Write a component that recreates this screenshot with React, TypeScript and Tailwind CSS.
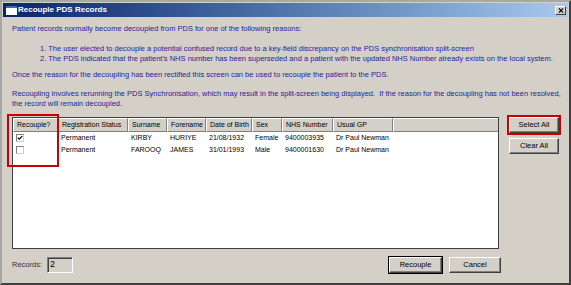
const cols = [
  { label: "Recouple?", w: 45 },
  { label: "Registration Status", w: 70 },
  { label: "Surname", w: 39 },
  { label: "Forename", w: 39 },
  { label: "Date of Birth", w: 46 },
  { label: "Sex", w: 30 },
  { label: "NHS Number", w: 51 },
  { label: "Usual GP", w: 60 },
];

const rows = [
  { checked: true, cells: ["Permanent", "KIRBY", "HURIYE", "21/08/1932", "Female", "9400003935", "Dr Paul Newman"] },
  { checked: false, cells: ["Permanent", "FAROOQ", "JAMES", "31/01/1993", "Male", "9400001630", "Dr Paul Newman"] },
];

const Button = ({ label, className = "" }: { label: string; className?: string }) => (
  <div
    className={`flex items-center justify-center bg-[#d4d0c8] border border-t-white border-l-white border-r-[#404040] border-b-[#404040] shadow-[inset_-1px_-1px_0_#808080] text-black ${className}`}
  >
    {label}
  </div>
);

const Checkbox = ({ checked }: { checked: boolean }) => (
  <div className="w-[8px] h-[8px] bg-white border border-t-[#808080] border-l-[#808080] border-r-[#d4d0c8] border-b-[#d4d0c8] flex items-center justify-center">
    {checked && (
      <svg viewBox="0 0 8 8" className="w-[6px] h-[6px]">
        <path d="M1 3.5 L3 5.5 L7 1.5" stroke="#000" strokeWidth="1.6" fill="none" />
      </svg>
    )}
  </div>
);

export default function App() {
  return (
    <div
      className="w-[571px] h-[285px] bg-[#d4d0c8] border-2 border-t-[#a8a8a8] border-l-[#a8a8a8] border-r-[#404040] border-b-[#404040] p-px flex flex-col text-[7.5px] leading-[10px]"
      style={{ fontFamily: '"Liberation Sans", Arial, sans-serif' }}
    >
      {/* title bar */}
      <div className="h-[14px] flex items-center bg-gradient-to-r from-[#0a246a] to-[#a6caf0] pl-[3px] pr-[2px]">
        <div className="w-[11px] h-[9px] bg-white border-t-2 border-[#3a6ea5]" />
        <span className="ml-[1px] text-white font-bold text-[8px]">Recouple PDS Records</span>
        <div className="ml-auto w-[11px] h-[9px] bg-[#d4d0c8] border border-t-white border-l-white border-r-[#404040] border-b-[#404040] flex items-center justify-center">
          <svg viewBox="0 0 7 6" className="w-[6px] h-[5px]">
            <path d="M1 0.5 L6 5.5 M6 0.5 L1 5.5" stroke="#000" strokeWidth="1.4" />
          </svg>
        </div>
      </div>

      {/* body */}
      <div className="relative flex-1 flex flex-col px-[9px] pt-[7px] text-[#24249a]">
        <p>Patient records normally become decoupled from PDS for one of the following reasons:</p>
        <div className="mt-[10px] pl-[28px]">
          <p>1. The user elected to decouple a potential confused record due to a key-field discrepancy on the PDS synchronisation split-screen</p>
          <p>2. The PDS indicated that the patient's NHS number has been superseded and a patient with the updated NHS Number already exists on the local system.</p>
        </div>
        <p className="mt-[6px]">Once the reason for the decoupling has been rectified this screen can be used to recouple the patient to the PDS.</p>
        <p className="mt-[9px] whitespace-pre">
          Recoupling involves rerunning the PDS Synchronisation, which may result in the split-screen being displayed.  If the reason for the decoupling has not been resolved,
        </p>
        <p>the record will remain decoupled.</p>

        <div className="mt-[8px] flex gap-[10px]">
          {/* grid */}
          <div className="w-[487px] h-[132px] bg-white border border-[#404040] flex flex-col text-black text-[7px]">
            <div className="h-[14px] flex bg-[#d4d0c8] shrink-0">
              {cols.map((c) => (
                <div
                  key={c.label}
                  style={{ width: c.w }}
                  className="h-full flex items-center pl-[3px] border-t border-l border-t-white border-l-white border-r border-r-[#808080] border-b border-b-[#808080] whitespace-nowrap overflow-hidden"
                >
                  {c.label}
                </div>
              ))}
              <div className="flex-1 h-full border-t border-l border-t-white border-l-white border-b border-b-[#808080]" />
            </div>
            {rows.map((r, i) => (
              <div key={i} className="h-[12px] flex items-center">
                <div style={{ width: cols[0].w }} className="pl-[3px]">
                  <Checkbox checked={r.checked} />
                </div>
                {r.cells.map((cell, j) => (
                  <div key={j} style={{ width: cols[j + 1].w }} className="pl-[3px] whitespace-nowrap">
                    {cell}
                  </div>
                ))}
              </div>
            ))}
          </div>

          {/* side buttons */}
          <div className="flex flex-col gap-[5px] text-black">
            <Button label="Select All" className="w-[50px] h-[16px]" />
            <Button label="Clear All" className="w-[50px] h-[16px]" />
          </div>
        </div>

        {/* bottom row */}
        <div className="mt-[8px] w-[489px] flex items-center text-black">
          <span className="text-[#333]">Records:</span>
          <div className="ml-[5px] w-[26px] h-[16px] border border-t-[#808080] border-l-[#808080] border-r-white border-b-white shadow-[inset_1px_1px_0_#404040] pl-[2px] flex items-start pt-[1px] text-[9px]">
            2
          </div>
          <Button label="Recouple" className="ml-auto w-[53px] h-[16px] outline outline-1 outline-[#000]" />
          <Button label="Cancel" className="ml-[7px] w-[52px] h-[16px]" />
        </div>

        {/* annotation highlights */}
        <div className="absolute left-[4px] top-[97px] w-[52px] h-[53px] border-2 border-[#cc0000] pointer-events-none" />
        <div className="absolute left-[504px] top-[98px] w-[54px] h-[20px] border-2 border-[#cc0000] pointer-events-none" />
      </div>
    </div>
  );
}
